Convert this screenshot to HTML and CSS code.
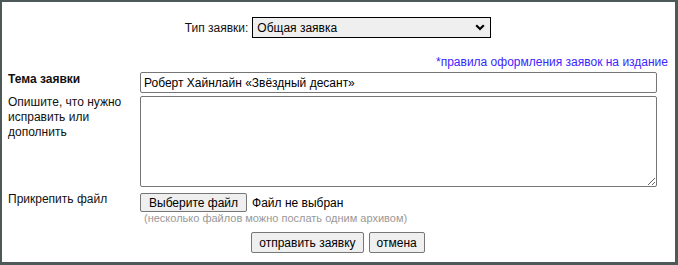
FILE: index.html
```html
<!DOCTYPE html>
<html lang="ru">
<head>
    <meta charset="UTF-8">
    <meta name="viewport" content="width=device-width, initial-scale=1.0">
    <title>Заявка на издание</title>
    <link rel="stylesheet" href="styles.css">
</head>
<body>
    <div class="frame">
        <div class="type-row">
            <span class="type-label">Тип заявки:</span>
            <span class="select-wrap">
                <select class="type-select">
                    <option>Общая заявка</option>
                    <option>Ошибка в тексте</option>
                    <option>Новое издание</option>
                </select>
                <svg class="chevron" width="10" height="7" viewBox="0 0 10 7">
                    <path d="M1.2 1.2 L5 5 L8.8 1.2" fill="none" stroke="#000" stroke-width="2.2"/>
                </svg>
            </span>
        </div>

        <div class="rules">
            <a href="#">*правила оформления заявок на издание</a>
        </div>

        <div class="form-grid">
            <label class="field-label bold">Тема заявки</label>
            <input class="text-input" type="text" value="Роберт Хайнлайн «Звёздный десант»">

            <label class="field-label">Опишите, что нужно исправить или дополнить</label>
            <textarea class="text-area"></textarea>

            <label class="field-label file-label">Прикрепить файл</label>
            <div class="file-cell">
                <div class="file-row">
                    <button class="btn file-btn" type="button">Выберите файл</button>
                    <span class="file-name">Файл не выбран</span>
                </div>
                <div class="hint">(несколько файлов можно послать одним архивом)</div>
            </div>
        </div>

        <div class="actions">
            <button class="btn" type="button">отправить заявку</button>
            <button class="btn" type="button">отмена</button>
        </div>
    </div>
</body>
</html>
```

FILE: styles.css
```css
body {
    margin: 0;
    font-family: 'Liberation Sans', Arial, sans-serif;
    font-size: 12px;
    color: #111;
    background: #fff;
}

.frame {
    box-sizing: border-box;
    width: 678px;
    height: 265px;
    border: 3px solid #4d5859;
    border-top-width: 2px;
    border-left-width: 2px;
    padding: 15px 7px 0 6px;
}

.type-row {
    display: flex;
    justify-content: center;
    align-items: center;
    gap: 4px;
    height: 21px;
}

.select-wrap {
    position: relative;
    display: inline-block;
}

.type-select {
    appearance: none;
    -webkit-appearance: none;
    box-sizing: border-box;
    width: 239px;
    height: 21px;
    margin: 0;
    padding: 0 20px 0 4px;
    border: 1px solid #000;
    border-radius: 0;
    background: #efefef;
    font-family: inherit;
    font-size: 12px;
    color: #000;
}

.chevron {
    position: absolute;
    right: 6px;
    top: 7px;
    pointer-events: none;
}

.rules {
    margin-top: 17px;
    text-align: right;
    line-height: 15px;
}

.rules a {
    color: #3b26ff;
    text-decoration: none;
}

.form-grid {
    display: grid;
    grid-template-columns: 132px 1fr;
    row-gap: 3px;
    margin: 2px 11px 0 0;
}

.field-label {
    padding-right: 8px;
    line-height: 15px;
    margin-top: -1px;
}

.bold {
    font-weight: bold;
    margin-top: 0;
}

.text-input {
    box-sizing: border-box;
    height: 21px;
    margin: 0;
    padding: 0 3px;
    border: 1px solid #767676;
    border-radius: 2px;
    font-family: inherit;
    font-size: 12px;
    color: #000;
}

.text-area {
    box-sizing: border-box;
    height: 91px;
    margin: 0;
    border: 1px solid #767676;
    border-radius: 2px;
    font-family: inherit;
    font-size: 12px;
    resize: vertical;
}

.file-label {
    margin-top: 2px;
}

.file-cell {
    padding-top: 3px;
}

.file-row {
    display: flex;
    align-items: center;
    gap: 5px;
}

.file-name {
    color: #000;
}

.hint {
    margin: 0 0 0 4px;
    font-size: 11px;
    line-height: 13px;
    color: #999;
}

.actions {
    display: flex;
    justify-content: center;
    gap: 5px;
    margin-top: 7px;
}

.btn {
    box-sizing: border-box;
    height: 21px;
    margin: 0;
    padding: 0 7px;
    border: 1px solid #767676;
    border-radius: 2px;
    background: #efefef;
    font-family: inherit;
    font-size: 12px;
    color: #000;
}

.file-btn {
    height: 19px;
    padding: 0 8px;
}
```
